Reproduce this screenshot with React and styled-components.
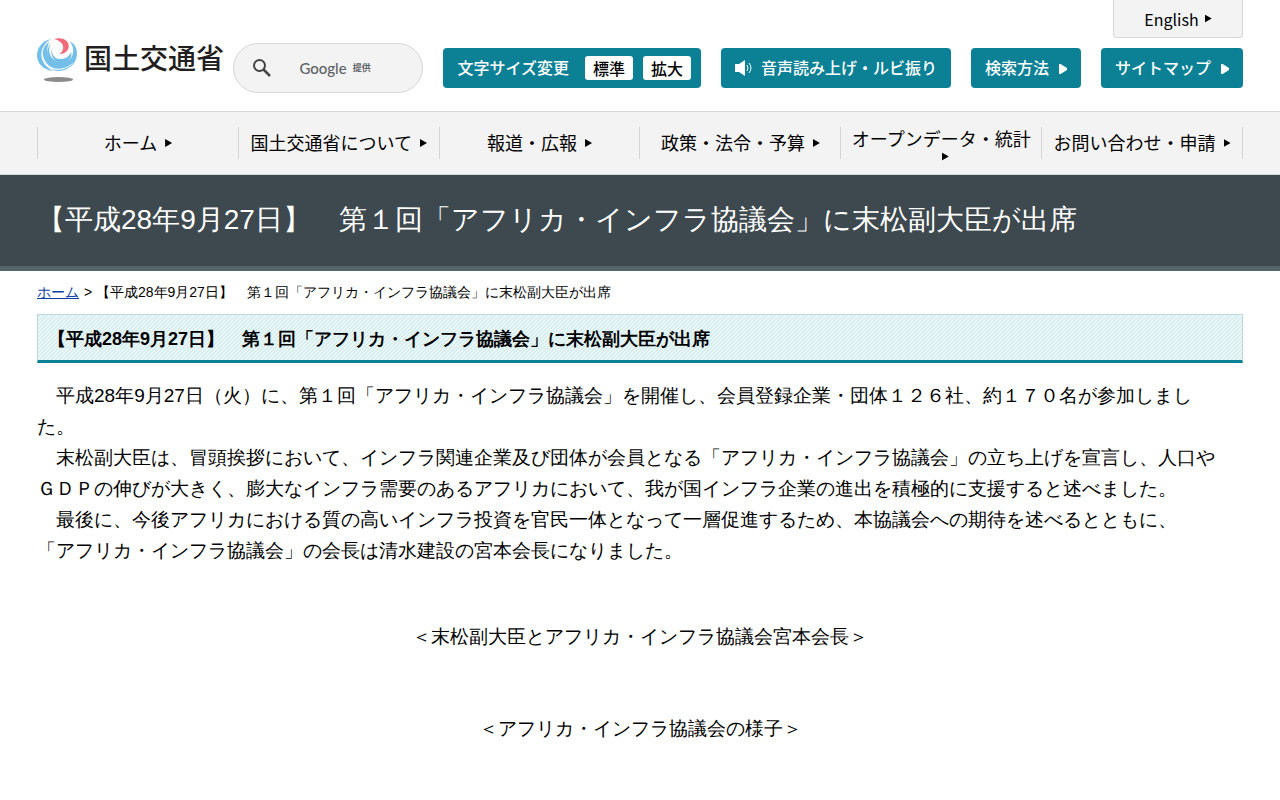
import React from "react";
import styled, { createGlobalStyle, css } from "styled-components";

const Global = createGlobalStyle`
  * { box-sizing: border-box; }
  body {
    margin: 0;
    background: #fff;
    color: #000;
    font-family: "Liberation Sans", sans-serif;
  }
  h1, h2, p, ul { margin: 0; padding: 0; }
`;

const headerFont = css`
  font-family: "Noto Sans CJK JP", sans-serif;
`;

const Container = styled.div`
  padding: 0 37px;
`;

const Header = styled.header`
  ${headerFont}
  padding: 0 37px 18px;
  border-bottom: 1px solid #d6d6d6;
`;

const LanguageBar = styled.div`
  display: flex;
  justify-content: flex-end;
`;

const Arrow = styled.span`
  flex: none;
  width: 7px;
  height: 8px;
  margin-left: ${(p) => p.$gap || 8}px;
  background: currentColor;
  clip-path: polygon(0 0, 100% 50%, 0 100%);
`;

const ToolArrow = styled(Arrow)`
  width: 8px;
  height: 10px;
  margin: 2px 0 0 10px;
  clip-path: polygon(0 0, 20% 0, 100% 40%, 100% 60%, 20% 100%, 0 100%);
`;

const Label = styled.span`
  padding-bottom: 2px;
  line-height: 25px;
`;

const LanguageLink = styled.a`
  display: flex;
  align-items: center;
  justify-content: center;
  width: 130px;
  height: 38px;
  border: 1px solid #d6d6d6;
  border-top: 0;
  border-radius: 0 0 4px 4px;
  background: #f3f3f3;
  color: #000;
  font-size: 16px;
  line-height: 24px;
  text-decoration: none;
`;

const Tools = styled.div`
  display: flex;
  align-items: flex-start;
  gap: 20px;
  padding-top: 10px;
`;

const LogoLink = styled.a`
  flex: 1 1 0;
  min-width: 0;
  height: 45px;
  margin: -11px -10px 0 0;
`;

const SearchForm = styled.form`
  display: flex;
  flex: none;
  align-items: center;
  width: 190px;
  height: 50px;
  margin-top: -5px;
  padding: 0 18px;
  border: 1px solid #d6d6d6;
  border-radius: 25px;
  background: #f3f3f3;
`;

const SearchButton = styled.button`
  display: flex;
  padding: 0;
  border: 0;
  background: none;
  color: #444;
`;

const SearchField = styled.label`
  position: relative;
  display: flex;
  flex: 1;
  align-items: center;
  height: 30px;
  min-width: 0;
`;

const SearchInput = styled.input`
  width: 100%;
  height: 100%;
  padding: 0;
  border: 0;
  background: transparent;
  outline: 0;
`;

const SearchBrand = styled.span`
  position: absolute;
  left: 27px;
  display: flex;
  align-items: center;
  gap: 6px;
  color: #5f6368;
  font-size: 9px;
  font-weight: 700;
  line-height: 16px;
  white-space: nowrap;
  pointer-events: none;
`;

const BrandName = styled.span`
  font-family: Lato, sans-serif;
  font-size: 15px;
  font-weight: 500;
`;

const toolBox = css`
  display: flex;
  align-items: center;
  height: 40px;
  border-radius: 4px;
  background: #0c8095;
  color: #fff;
  font-size: 16px;
  font-weight: 500;
  white-space: nowrap;
`;

const SizeBox = styled.div`
  ${toolBox}
  gap: 10px;
  padding: 0 10px 0 14px;
`;

const SizeLabel = styled(Label)`
  margin-right: 6px;
`;

const SizeButton = styled.button`
  ${headerFont}
  height: 24px;
  padding: 0 8px;
  border: 0;
  border-radius: 3px;
  background: #fff;
  color: #000;
  font-size: 16px;
  font-weight: 500;
  line-height: 24px;
`;

const ToolLink = styled.a`
  ${toolBox}
  padding: 0 14px;
  text-decoration: none;
`;

const SpeakerIcon = styled.svg`
  margin-right: 8px;
`;

const Nav = styled.nav`
  ${headerFont}
  padding: 15px 37px;
  border-bottom: 1px solid #d6d6d6;
  background: #f3f3f3;
`;

const NavList = styled.ul`
  display: flex;
  list-style: none;
  border-left: 1px solid #d6d6d6;
`;

const NavItem = styled.li`
  flex: 1 1 0;
  min-width: 0;
  border-right: 1px solid #d6d6d6;
`;

const NavLink = styled.a`
  display: flex;
  flex-wrap: wrap;
  align-items: center;
  align-content: center;
  justify-content: center;
  height: 32px;
  padding: 0 8px;
  color: #000;
  font-size: 18px;
  text-decoration: none;
  white-space: nowrap;
`;

const TitleBand = styled.div`
  padding: 26px 37px 27px;
  border-bottom: 5px solid #56646b;
  background: #3d494e;
  color: #fff;
`;

const Title = styled.h1`
  font-size: 28px;
  font-weight: 400;
  line-height: 38px;
`;

const Breadcrumb = styled.nav`
  padding: 11px 0 12px;
  font-size: 14px;
  line-height: 20px;
`;

const HomeLink = styled.a`
  margin-right: 1px;
  color: #0a3ea6;
`;

const SectionHeading = styled.h2`
  padding: 12px 10px 8px;
  border: 1px solid #bcd8dc;
  border-bottom: 3px solid #0c8095;
  background: #d8eff1 url("data:image/svg+xml,%3Csvg xmlns='http://www.w3.org/2000/svg' width='4' height='4' shape-rendering='crispEdges'%3E%3Cpath d='M3 0h1v1h-1zM2 1h1v1h-1zM1 2h1v1h-1zM0 3h1v1h-1z' fill='%23fff'/%3E%3C/svg%3E");
  font-size: 18px;
  font-weight: 700;
  line-height: 25px;
`;

const Article = styled.article`
  padding: 17px 0 40px;
  font-size: 19px;
  line-height: 31px;
`;

const Paragraph = styled.p`
  padding-right: 20px;
`;

const Caption = styled.p`
  margin-top: ${(p) => p.$gap}px;
  text-align: center;
`;

const navItems = [
  "ホーム",
  "国土交通省について",
  "報道・広報",
  "政策・法令・予算",
  "オープンデータ・統計",
  "お問い合わせ・申請",
];

const title = "【平成28年9月27日】　第１回「アフリカ・インフラ協議会」に末松副大臣が出席";

const LogoText = styled.text`
  ${headerFont}
  font-size: 28px;
  font-weight: 500;
  fill: #231f20;
`;

function Logo() {
  return (
    <svg width="186" height="47" viewBox="0 0 186 47" overflow="visible" role="img" aria-label="国土交通省">
      <g fill="#74bfe9">
        <path d="M14 2C5 4 0 11 0 18.500C0 27 7 33 16 34C8 29.500 3.500 23 4.500 15.500C5.300 9.500 9 5 14 2Z" />
        <path d="M12.500 4.500C7.500 8 5 13 6 18.500C7.500 27 15 32.500 23 31.800C30 31 35.500 27 37.500 21.500C32 27.500 24 28.800 17.500 25C10 20.500 8.500 12 12.500 4.500Z" />
        <path d="M14 6C10.500 13 12 20 18.500 23.800C25 27.300 33 25 35.500 18C37 13 36 8 32.500 4.500C37 6 40 10.500 40 16.500C40 26.500 31.500 34 21 34C18.500 34 15.500 33 13.500 31.500C21 34.500 31 32.500 36.500 25.500C31 30 23 31 16.500 26.500C9 21.500 8.500 12.500 14 6Z" />
        <path d="M16 9C13.500 14 15.500 19.500 20 21.500C25.500 23.500 32 20.500 34 15C36 21 31 26 25 26C17 26 11.500 17 16 9Z" />
      </g>
      <path d="M17 2C22 .5 27 1 30 4.500C34 9 31 17 22.500 17C26 14.500 27 11 25.500 7.500C24 4.500 20.500 3 17 2Z" fill="#f06a7b" />
      <ellipse cx="21.500" cy="42.500" rx="14.500" ry="2.500" fill="#8b8b8b" />
      <LogoText x="47" y="32">国土交通省</LogoText>
    </svg>
  );
}

export default function App() {
  return (
    <>
      <Global />
      <Header>
        <LanguageBar>
          <LanguageLink href="#english">English<Arrow $gap={6} /></LanguageLink>
        </LanguageBar>
        <Tools>
          <LogoLink href="#home"><Logo /></LogoLink>
          <SearchForm>
            <SearchButton type="button" aria-label="検索">
              <svg width="20" height="20" viewBox="0 0 20 20" fill="none" stroke="currentColor" strokeWidth="2">
                <circle cx="7.500" cy="7.500" r="5.500" /><path d="M11.500 11.500l6.500 6.500" strokeWidth="2.500" />
              </svg>
            </SearchButton>
            <SearchField>
              <SearchInput type="text" aria-label="サイト内検索" />
              <SearchBrand><BrandName>Google</BrandName>提供</SearchBrand>
            </SearchField>
          </SearchForm>
          <SizeBox>
            <SizeLabel>文字サイズ変更</SizeLabel>
            <SizeButton type="button">標準</SizeButton>
            <SizeButton type="button">拡大</SizeButton>
          </SizeBox>
          <ToolLink href="#voice">
            <SpeakerIcon width="18" height="16" viewBox="0 0 18 16" fill="none" stroke="#fff">
              <path d="M0 4h4l6-4v16l-6-4H0z" fill="#fff" stroke="none" />
              <path d="M12 5q2 3 0 6M14 3q4 5 0 10" />
            </SpeakerIcon>
            <Label>音声読み上げ・ルビ振り</Label>
          </ToolLink>
          <ToolLink href="#howto"><Label>検索方法</Label><ToolArrow /></ToolLink>
          <ToolLink href="#sitemap"><Label>サイトマップ</Label><ToolArrow /></ToolLink>
        </Tools>
      </Header>
      <Nav>
        <NavList>
          {navItems.map((item) => (
            <NavItem key={item}>
              <NavLink href="#nav"><Label>{item}</Label><Arrow /></NavLink>
            </NavItem>
          ))}
        </NavList>
      </Nav>
      <TitleBand>
        <Title>{title}</Title>
      </TitleBand>
      <Container>
        <Breadcrumb>
          <HomeLink href="#home">ホーム</HomeLink> &gt; {title}
        </Breadcrumb>
        <SectionHeading>{title}</SectionHeading>
        <Article>
          <Paragraph>
            {"　平成28年9月27日（火）に、第１回「アフリカ・インフラ協議会」を開催し、会員登録企業・団体１２６社、約１７０名が参加しました。"}
          </Paragraph>
          <Paragraph>
            {"　末松副大臣は、冒頭挨拶において、インフラ関連企業及び団体が会員となる「アフリカ・インフラ協議会」の立ち上げを宣言し、人口やＧＤＰの伸びが大きく、膨大なインフラ需要のあるアフリカにおいて、我が国インフラ企業の進出を積極的に支援すると述べました。"}
          </Paragraph>
          <Paragraph>
            {"　最後に、今後アフリカにおける質の高いインフラ投資を官民一体となって一層促進するため、本協議会への期待を述べるとともに、"}
            <br />
            {"「アフリカ・インフラ協議会」の会長は清水建設の宮本会長になりました。"}
          </Paragraph>
          <Caption $gap={55}>＜末松副大臣とアフリカ・インフラ協議会宮本会長＞</Caption>
          <Caption $gap={61}>＜アフリカ・インフラ協議会の様子＞</Caption>
        </Article>
      </Container>
    </>
  );
}
